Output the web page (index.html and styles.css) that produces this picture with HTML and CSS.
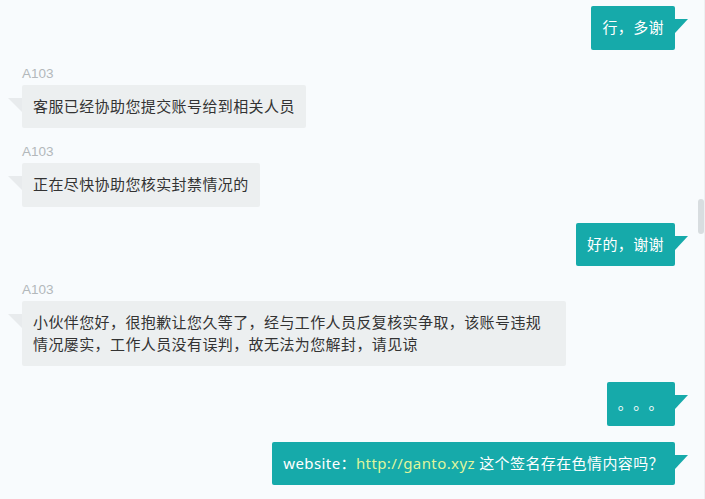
FILE: index.html
```html
<!DOCTYPE html>
<html lang="zh-CN">
<head>
<meta charset="utf-8">
<title>chat</title>
<link rel="stylesheet" href="styles.css">
</head>
<body>
<div class="chat">
  <div class="msg msg-out"><div class="bubble bubble-out">行，多谢</div></div>
  <div class="msg msg-in"><div class="name">A103</div><div class="bubble bubble-in">客服已经协助您提交账号给到相关人员</div></div>
  <div class="msg msg-in"><div class="name">A103</div><div class="bubble bubble-in">正在尽快协助您核实封禁情况的</div></div>
  <div class="msg msg-out"><div class="bubble bubble-out">好的，谢谢</div></div>
  <div class="msg msg-in"><div class="name">A103</div><div class="bubble bubble-in">小伙伴您好，很抱歉让您久等了，经与工作人员反复核实争取，该账号违规情况屡实，工作人员没有误判，故无法为您解封，请见谅</div></div>
  <div class="msg msg-out"><div class="bubble bubble-out">。。。</div></div>
  <div class="msg msg-out"><div class="bubble bubble-out">website：<span class="link">http://ganto.xyz</span> 这个签名存在色情内容吗？</div></div>
</div>
<div class="scroll-thumb"></div>
</body>
</html>
```
FILE: styles.css
```css
html, body {
  margin: 0;
  padding: 0;
  height: 100%;
}
body {
  background: #f8fbfd;
  font-family: "Noto Sans", "Noto Sans CJK SC", sans-serif;
  overflow: hidden;
  border-right: 1px solid #edf0f2;
  box-sizing: border-box;
}
.chat {
  display: flex;
  flex-direction: column;
  gap: 16px;
  padding: 6px 29px 0 22px;
}
.msg {
  display: flex;
  flex-direction: column;
}
.msg-out {
  align-items: flex-end;
}
.msg-in {
  align-items: flex-start;
}
.name {
  font-family: "Liberation Sans", Arial, sans-serif;
  font-size: 13.5px;
  line-height: 16px;
  color: #b3b8bb;
  margin-bottom: 3px;
}
.bubble {
  position: relative;
  font-size: 15px;
  letter-spacing: 0.4px;
  line-height: 21.5px;
  padding: 11px 11px;
  border-radius: 2px;
  max-width: 544px;
  box-sizing: border-box;
  text-spacing-trim: space-all;
}
.bubble-out {
  background: #16aaaa;
  color: #ffffff;
}
.bubble-out::after {
  content: "";
  position: absolute;
  left: 100%;
  top: 13px;
  width: 0;
  height: 0;
  border-top: 14px solid #16aaaa;
  border-right: 13px solid transparent;
}
.bubble-in {
  background: #eceff0;
  color: #333333;
}
.bubble-in::before {
  content: "";
  position: absolute;
  right: 100%;
  top: 13px;
  width: 0;
  height: 0;
  border-top: 14px solid #e8ebed;
  border-left: 14px solid transparent;
}
.link {
  color: #dff59c;
}
.scroll-thumb {
  position: absolute;
  top: 199px;
  right: 1px;
  width: 6px;
  height: 35px;
  border-radius: 3px;
  background: #d8dde0;
}
```
